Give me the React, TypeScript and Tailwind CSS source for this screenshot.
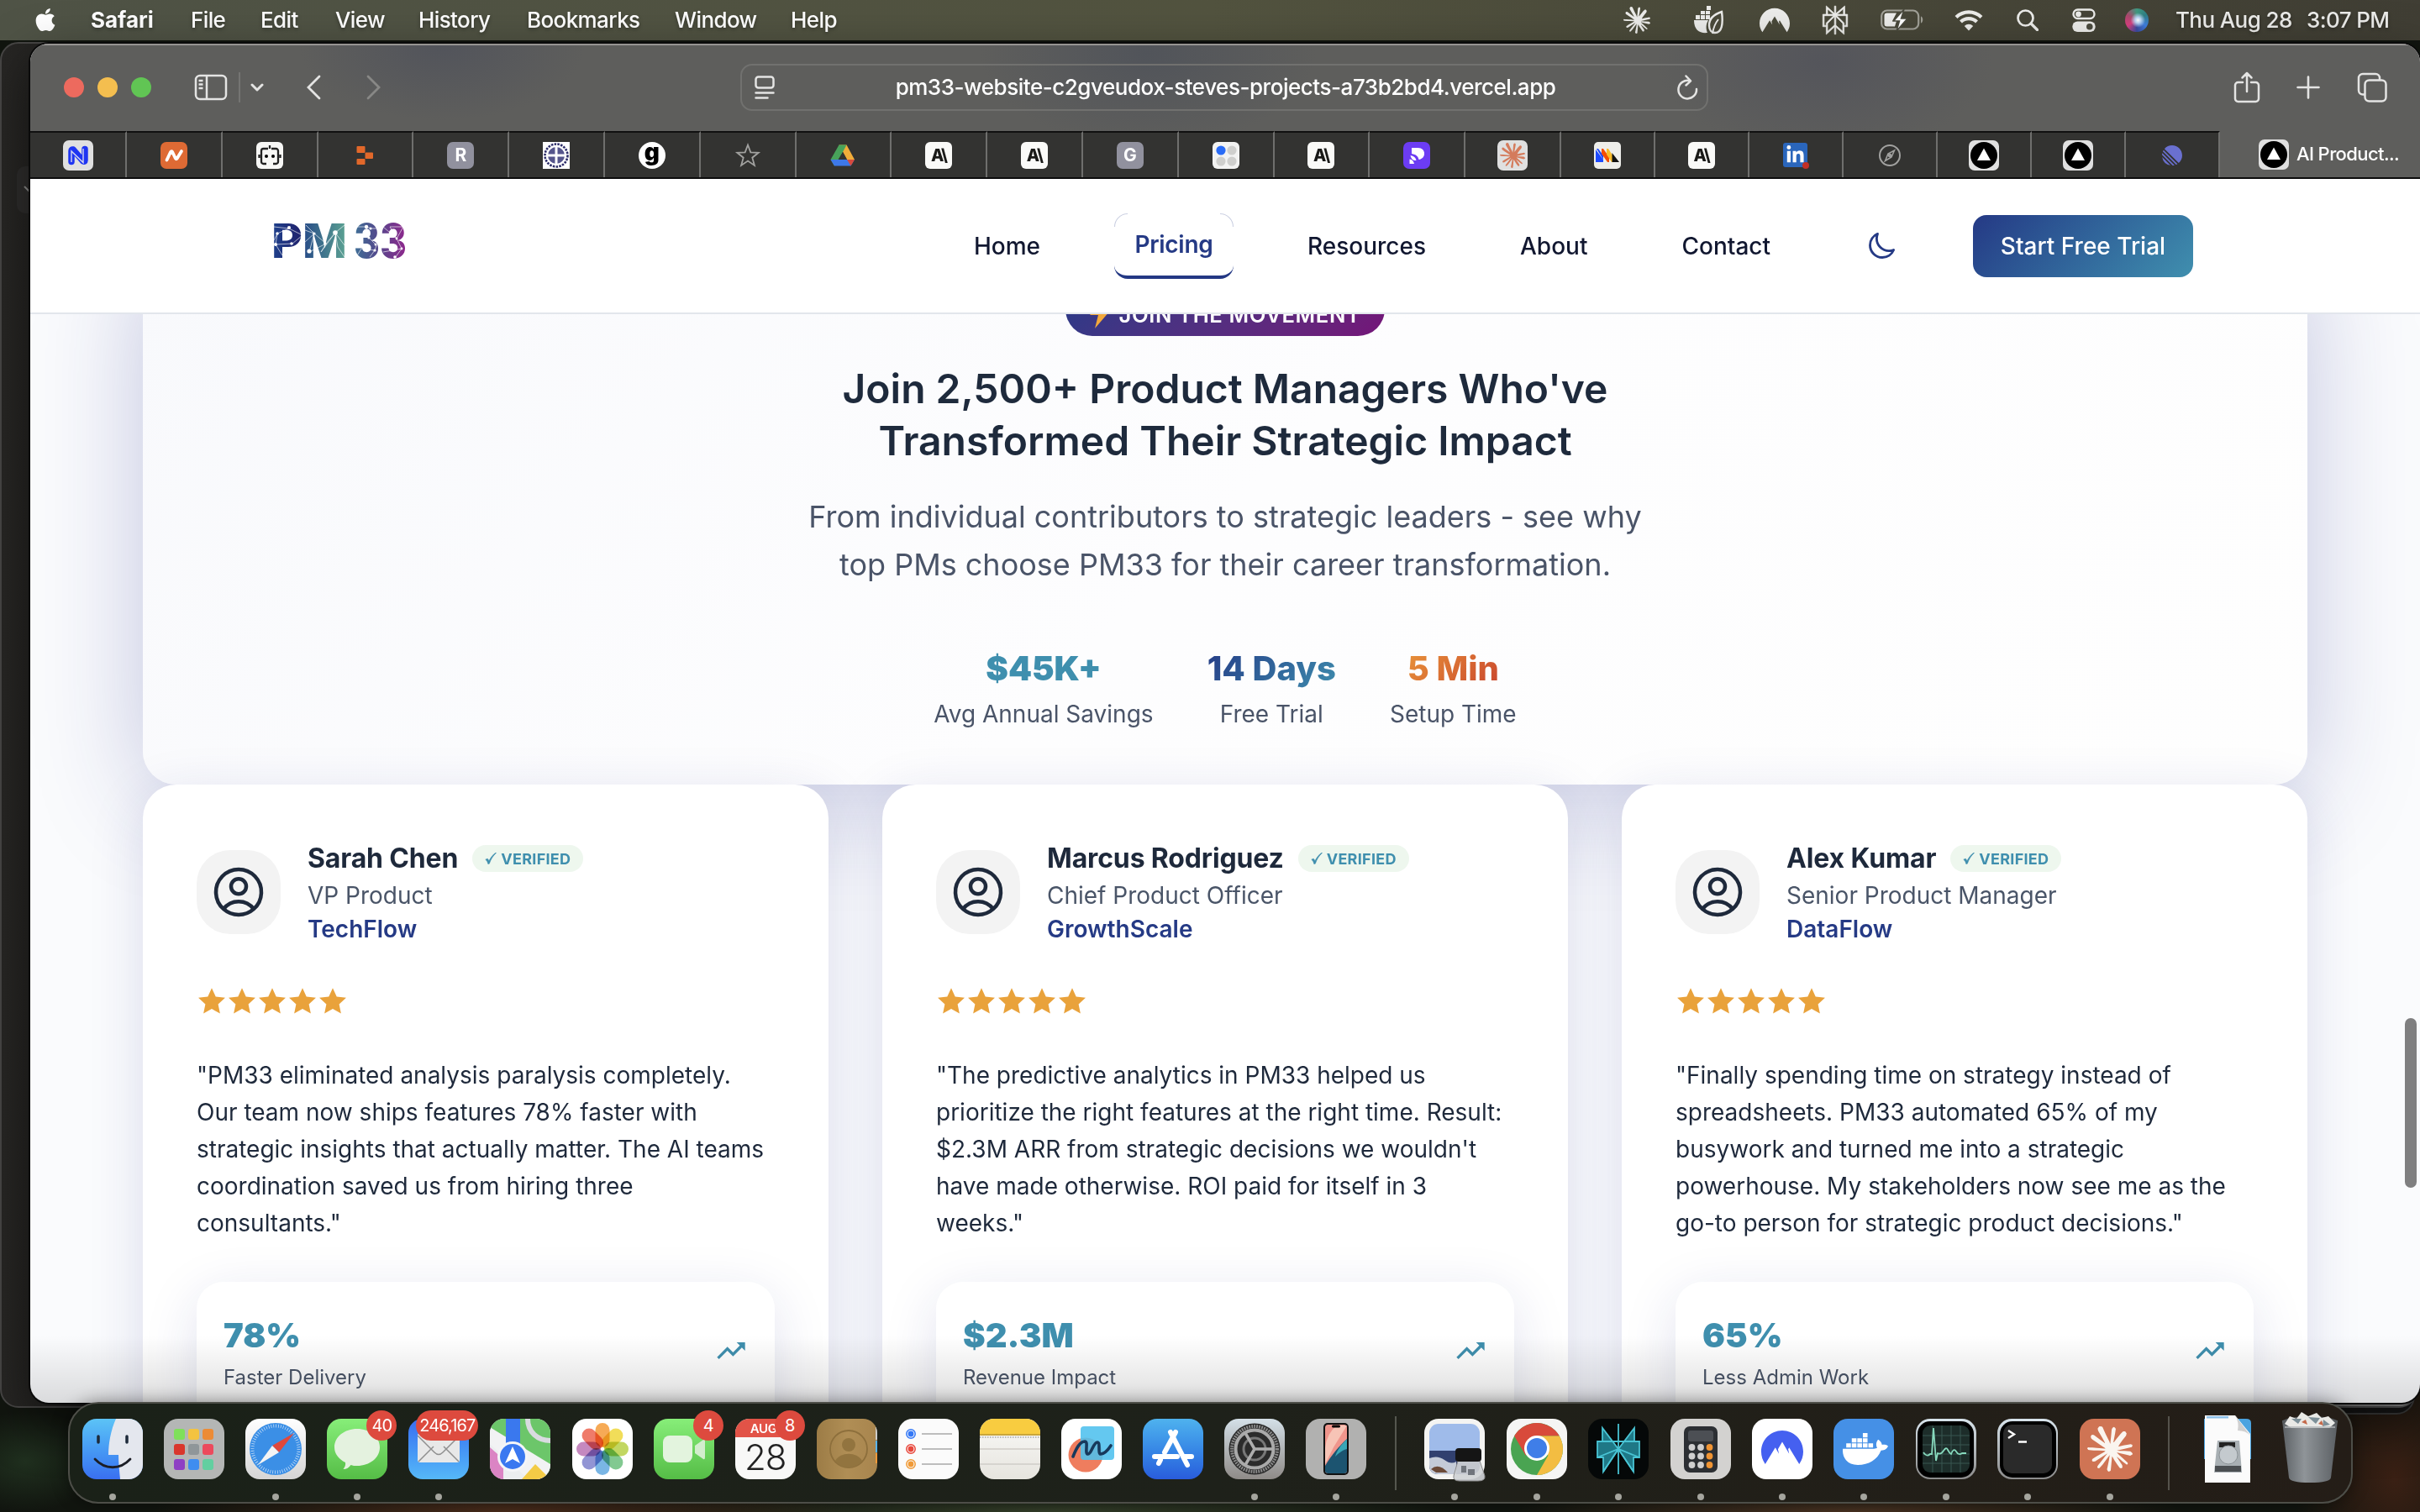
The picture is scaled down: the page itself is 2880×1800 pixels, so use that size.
import React from "react";
import { FaApple, FaDocker, FaLinkedinIn } from "react-icons/fa";
import { SiClaude, SiPerplexity, SiNordvpn, SiLinear } from "react-icons/si";

/* ---------- Menu bar ---------- */

const menuItems: [string, string][] = [
  ["File", "w-[83px]"],
  ["Edit", "w-[89px]"],
  ["View", "w-[99px]"],
  ["History", "w-[129px]"],
  ["Bookmarks", "w-[176px]"],
  ["Window", "w-[138px]"],
  ["Help", "w-[80px]"],
];

function MenuBar() {
  return (
    <div className="flex h-[48px] w-full shrink-0 items-center bg-linear-to-r from-[#4f5346] via-[#52533f] to-[#403e34] pb-[1px] text-[26px] font-medium tracking-[-0.6px] text-white [text-shadow:0_2px_4px_rgba(0,0,0,0.35)]">
      <FaApple className="ml-[38px] h-[31px] w-[32px]" />
      <div className="ml-[38px] w-[119px] font-bold tracking-normal">Safari</div>
      {menuItems.map(([label, w]) => (
        <div key={label} className={w}>
          {label}
        </div>
      ))}
      <div className="mr-[3px] ml-auto flex items-center text-[#ececea]">
        <SiClaude className="h-[32px] w-[32px]" />
        <svg viewBox="0 0 36 34" className="ml-[52px] h-[34px] w-[36px]" fill="currentColor">
          <rect x="2" y="11" width="5" height="5" />
          <rect x="8" y="11" width="5" height="5" />
          <rect x="14" y="11" width="5" height="5" />
          <rect x="8" y="6" width="5" height="4" />
          <rect x="14" y="6" width="5" height="4" />
          <rect x="15" y="0" width="5" height="5" />
          <path d="M0 17h17c-3 5-3 10-1 15-9 1-16-3-16-15Z" />
          <path d="M33 7c-9 3-15 8-15 16 0 6 3 9 7 9 8 0 10-10 8-25Z" fill="none" stroke="currentColor" strokeWidth="2.4" />
          <path d="M22 33c1-7 3-12 7-17" fill="none" stroke="currentColor" strokeWidth="2" />
        </svg>
        <SiNordvpn className="ml-[42px] h-[38px] w-[36px]" />
        <SiPerplexity className="ml-[37px] h-[34px] w-[34px] overflow-visible stroke-[#ececea] stroke-[0.5px]" />
        <svg viewBox="0 0 52 26" className="ml-[37px] h-[26px] w-[52px]">
          <rect x="1.2" y="1.5" width="44" height="22" rx="6.5" fill="none" stroke="#a1a198" strokeWidth="2.2" />
          <path d="M48 8.5c3 1 3 7 0 8z" fill="#a1a198" />
          <path d="M7.5 4.5H19L14 14h5l-2 6.500H7.500a3 3 0 0 1-3-3v-10a3 3 0 0 1 3-3Z" fill="#ececea" />
          <path d="M28 0 15.500 14h7L19 26 32 11h-7.500z" fill="#fff" stroke="#4b4b3f" strokeWidth="1.500" />
        </svg>
        <svg viewBox="0 0 34 26" className="ml-[36px] h-[26px] w-[34px]" fill="none" stroke="currentColor" strokeWidth="4.200">
          <path d="M2 9.500a21.500 21.500 0 0 1 30 0" />
          <path d="M7.500 15a13.500 13.500 0 0 1 19 0" />
          <path d="M17 25.500 11.800 20a7.400 7.400 0 0 1 10.400 0z" fill="currentColor" stroke="none" />
        </svg>
        <svg viewBox="0 0 26 26" className="ml-[40px] h-[26px] w-[26px]" fill="none" stroke="currentColor" strokeWidth="2.700">
          <circle cx="10.500" cy="10.500" r="9" />
          <path d="m17 17 7.500 7.500" strokeLinecap="round" strokeWidth="3.200" />
        </svg>
        <svg viewBox="0 0 28 28" className="ml-[40px] h-[28px] w-[28px]">
          <rect x="1.500" y="1.500" width="25" height="10.500" rx="5.200" fill="none" stroke="#ececea" strokeWidth="2.400" />
          <circle cx="7.500" cy="6.800" r="3.400" fill="#ececea" />
          <rect x="0.300" y="15.500" width="27.400" height="12.500" rx="6.200" fill="#ececea" />
          <circle cx="20.800" cy="21.700" r="3.800" fill="#4b4b3f" />
        </svg>
        <div className="ml-[35px] h-[28px] w-[28px] rounded-full bg-[radial-gradient(circle_at_55%_50%,#fff_0%,#bcd6f5_16%,transparent_42%),conic-gradient(from_0deg,#3f9a80,#2f7f86,#3f7fe0,#3a4aa0,#d8407f,#a84a6c,#3f9a80)]" />
        <div className="ml-[32px] w-[156px]">Thu Aug 28</div>
        <div className="w-[132px]">3:07 PM</div>
      </div>
    </div>
  );
}

/* ---------- Browser toolbar ---------- */

function Toolbar() {
  return (
    <div className="flex h-[104px] shrink-0 items-center border-t-2 border-[#969492] bg-[#5e5e5c] bg-[radial-gradient(ellipse_170px_90px_at_490px_0px,#52545b,transparent),radial-gradient(ellipse_200px_110px_at_1330px_10px,#51545a,transparent),radial-gradient(ellipse_200px_110px_at_2135px_20px,#54555b,transparent)] pb-[3px] text-[#e4e4e3]">
      <div className="ml-[40px] h-[24px] w-[24px] rounded-full bg-[#ed6a5e]" />
      <div className="ml-[16px] h-[24px] w-[24px] rounded-full bg-[#f4be4f]" />
      <div className="ml-[16px] h-[24px] w-[24px] rounded-full bg-[#61c554]" />
      <svg viewBox="0 0 40 32" className="ml-[51px] h-[32px] w-[40px]" fill="none" stroke="currentColor" strokeWidth="2.500">
        <rect x="2" y="2" width="36" height="28" rx="5" />
        <path d="M15 2v28M5.500 8h5M5.500 12.500h5M5.500 17h5" />
      </svg>
      <div className="ml-[13px] h-[36px] w-[2px] bg-[#747472]" />
      <svg viewBox="0 0 16 10" className="ml-[12px] h-[10px] w-[16px]" fill="none" stroke="currentColor" strokeWidth="3" strokeLinecap="round" strokeLinejoin="round">
        <path d="m2 2 6 6 6-6" />
      </svg>
      <svg viewBox="0 0 18 30" className="ml-[50px] h-[30px] w-[18px]" fill="none" stroke="currentColor" strokeWidth="2.800" strokeLinecap="round">
        <path d="M16 2 3 15l13 13" />
      </svg>
      <svg viewBox="0 0 18 30" className="ml-[54px] h-[30px] w-[18px]" fill="none" stroke="#888886" strokeWidth="2.800" strokeLinecap="round">
        <path d="m2 2 13 13L2 28" />
      </svg>
      <div className="ml-[427px] flex h-[56px] w-[1152px] items-center rounded-[14px] border-2 border-[#71716f]">
        <svg viewBox="0 0 24 28" className="ml-[15px] h-[28px] w-[24px]" fill="none" stroke="currentColor" strokeWidth="2.500" strokeLinecap="round">
          <rect x="1.500" y="1.500" width="21" height="13" rx="3" />
          <path d="M1.500 20.500h21M1.500 26.500h14" />
        </svg>
        <div className="flex-1 text-center text-[26px] font-medium tracking-[-0.47px] text-white">
          pm33-website-c2gveudox-steves-projects-a73b2bd4.vercel.app
        </div>
        <svg viewBox="0 0 26 30" className="mr-[10px] h-[30px] w-[26px]" fill="none" stroke="currentColor" strokeWidth="2.500" strokeLinecap="round" strokeLinejoin="round">
          <path d="M16 7.200A10.800 10.800 0 1 0 24 17" />
          <path d="m11.500 1.500 5.500 5.800-5.500 5.200" />
        </svg>
      </div>
      <svg viewBox="0 0 32 38" className="ml-[625px] h-[38px] w-[32px]" fill="none" stroke="currentColor" strokeWidth="2.500" strokeLinecap="round" strokeLinejoin="round">
        <path d="M11 13H5.500A3.500 3.500 0 0 0 2 16.500v16A3.500 3.500 0 0 0 5.500 36h21a3.500 3.500 0 0 0 3.500-3.500v-16a3.500 3.500 0 0 0-3.500-3.500H21M16 24V2M10.500 7.500 16 2l5.500 5.500" />
      </svg>
      <svg viewBox="0 0 28 28" className="ml-[43px] h-[28px] w-[28px]" fill="none" stroke="currentColor" strokeWidth="2.600" strokeLinecap="round">
        <path d="M14 1.500v25M1.500 14h25" />
      </svg>
      <svg viewBox="0 0 36 36" className="ml-[44px] h-[36px] w-[36px]" fill="none" stroke="currentColor" strokeWidth="2.500">
        <path d="M9.500 26.500H7A5 5 0 0 1 2 21.500V7a5 5 0 0 1 5-5h15a5 5 0 0 1 5 5v2.500" />
        <rect x="9.500" y="9.500" width="25" height="25" rx="5" />
      </svg>
    </div>
  );
}

/* ---------- Tab strip ---------- */

const AiTab = () => (
  <div className="flex h-[32px] w-[32px] items-center justify-center rounded-[6px] bg-[#fafaf8] text-[20px] font-extrabold tracking-[-1.5px] text-[#1a1a18]">A\</div>
);
const VercelTab = () => (
  <svg viewBox="0 0 36 36" className="h-[36px] w-[36px] shrink-0">
    <rect width="36" height="36" rx="7" fill="#e0e0e0" />
    <circle cx="18" cy="18" r="16" fill="#000" />
    <path d="M18 9.500 26 24H10z" fill="#fff" />
  </svg>
);
const LetterTab = ({ letter }: { letter: string }) => (
  <div className="flex h-[32px] w-[32px] items-center justify-center rounded-[7px] bg-[#91919e] text-[21px] font-bold text-white">{letter}</div>
);

const tabIcons: React.ReactNode[] = [
  <svg viewBox="0 0 36 36" className="h-[36px] w-[36px]">
    <rect width="36" height="36" rx="7" fill="#e0e0e0" />
    <path d="M10 25.500V12.500q0-2 2-1.500l12 14q2 1 2-1V10.500" fill="none" stroke="#1f35f2" strokeWidth="7.500" strokeLinejoin="round" strokeLinecap="round" />
    <path d="M10 26V13l14 13.500V10" fill="none" stroke="#d6d8f0" strokeWidth="1.400" />
  </svg>,
  <svg viewBox="0 0 32 32" className="h-[32px] w-[32px]">
    <rect width="32" height="32" rx="7" fill="#de6a34" />
    <path d="M7.500 21.500 12 12q1-1.500 2.200 0l3.600 7.500q1 1.500 2 0L25 11" fill="none" stroke="#fff" strokeWidth="3.800" strokeLinecap="round" strokeLinejoin="round" />
  </svg>,
  <svg viewBox="0 0 32 32" className="h-[32px] w-[32px]">
    <rect width="32" height="32" rx="6" fill="#f7f7f5" />
    <path d="M14 8H8.500A2.500 2.500 0 0 0 6 10.500v13A2.500 2.500 0 0 0 8.500 26H12M18 8h5.500a2.500 2.500 0 0 1 2.500 2.500v13a2.500 2.500 0 0 1-2.500 2.500H20M16 4v4M3.500 15v4M28.500 15v4" fill="none" stroke="#222" strokeWidth="2.300" />
    <circle cx="12" cy="17" r="2" />
    <circle cx="20" cy="17" r="2" />
  </svg>,
  <svg viewBox="0 0 32 32" className="h-[32px] w-[32px]" fill="#e2682a">
    <rect x="6.500" y="5" width="10" height="8" rx="1" />
    <rect x="16.500" y="12.500" width="9.500" height="7.500" rx="1" />
    <rect x="6.500" y="20" width="10" height="7" rx="1" />
  </svg>,
  <LetterTab letter="R" />,
  <svg viewBox="0 0 32 32" className="h-[32px] w-[32px]">
    <rect width="32" height="32" fill="#fff" />
    <circle cx="16" cy="16" r="13.500" fill="none" stroke="#2b2b68" strokeWidth="2.600" strokeDasharray="2.500 1.300" />
    <circle cx="16" cy="16" r="10" fill="#55558c" />
    <path d="M16 6v20M6 16h20" stroke="#fff" strokeWidth="3" />
  </svg>,
  <div className="flex h-[32px] w-[32px] items-center justify-center rounded-full bg-white text-[28px] leading-none font-black text-black">
    <span className="-mt-[7px]">g</span>
  </div>,
  <svg viewBox="0 0 32 32" className="h-[32px] w-[32px]" fill="none" stroke="#a2a2a0" strokeWidth="1.800">
    <path d="m16 3.500 3.300 8.900 9.400.4-7.400 5.900 2.600 9.200-7.900-5.300-7.900 5.300 2.600-9.200-7.400-5.900 9.400-.4z" />
  </svg>,
  <svg viewBox="0 0 32 32" className="h-[32px] w-[32px]">
    <path d="M11.500 3.500h9L30 21h-9z" fill="#f1ad3a" />
    <path d="M11.500 3.500h9L16 12 6 28.500 1.500 21z" fill="#48a25a" />
    <path d="M6 28.500 1.500 21H30l-4.500 7.500z" fill="#3d78e8" />
    <path d="M21 21h9l-4.500 7.500z" fill="#d84a3c" />
    <path d="m16 12 5 9H11z" fill="#333331" />
  </svg>,
  <AiTab />,
  <AiTab />,
  <LetterTab letter="G" />,
  <svg viewBox="0 0 32 32" className="h-[32px] w-[32px]">
    <rect width="32" height="32" rx="6" fill="#f3f3f2" />
    <circle cx="10" cy="10" r="5.600" fill="#2a6cf6" />
    <circle cx="23" cy="10" r="5.600" fill="#cfcfcd" />
    <circle cx="10" cy="23" r="5.600" fill="#cfcfcd" />
    <circle cx="23" cy="23" r="5.600" fill="#cfcfcd" />
  </svg>,
  <AiTab />,
  <svg viewBox="0 0 32 32" className="h-[32px] w-[32px]">
    <rect width="32" height="32" rx="7" fill="#6c3cf3" />
    <path d="M10 7h7.500c10 0 10 13 1 14-1-4-3-6-8.500-7zM8.500 16c4 .5 6.500 2.500 7 6-3 .5-6-1-7-6ZM7.500 20.500c3 .3 5 2.500 5.500 5.500H7.500z" fill="#fff" />
  </svg>,
  <div className="flex h-[36px] w-[36px] items-center justify-center rounded-[7px] bg-[#e0e0e0]">
    <SiClaude className="h-[30px] w-[30px] text-[#d47b5c]" />
  </div>,
  <svg viewBox="0 0 32 32" className="h-[32px] w-[32px]">
    <rect width="32" height="32" rx="5" fill="#eeeeea" />
    <path d="M2 9v15h9v-3z" fill="#1d4aff" />
    <path d="M3 8h2l6 8v5z" fill="#1d4aff" />
    <path d="M9 8h2l7 10v6h-2l-7-10z" fill="#f54e00" />
    <path d="M15 8h2l5 8v8h-1l-6-9z" fill="#f9bd2b" />
    <path d="M21.500 13 30 24h-8.500z" fill="#111" />
  </svg>,
  <AiTab />,
  <div className="relative flex h-[29px] w-[29px] items-center justify-center rounded-[3px] bg-[#2a66bc]">
    <FaLinkedinIn className="h-[23px] w-[23px] text-white" />
    <div className="absolute -right-[2px] -bottom-[2px] h-[8px] w-[8px] rounded-full bg-[#c22f25]" />
  </div>,
  <svg viewBox="0 0 32 32" className="h-[32px] w-[32px]" fill="none" stroke="#a2a2a0" strokeWidth="2">
    <circle cx="16" cy="16" r="12" />
    <path d="m21.500 10-3.500 8-7.500 4.500 3.500-8.500z" strokeWidth="1.600" />
    <circle cx="16" cy="16" r="1.300" />
  </svg>,
  <VercelTab />,
  <VercelTab />,
  <SiLinear className="h-[24px] w-[24px] text-[#6a70d0]" />,
];

function TabStrip() {
  return (
    <div className="flex h-[57px] shrink-0 border-b-2 border-[#0c0c0c] bg-[#333331]">
      {tabIcons.map((icon, i) => (
        <div
          key={i}
          className={`${i === 0 ? "w-[115px]" : i < 16 ? "w-[113.800px]" : "w-[112px]"} flex shrink-0 items-center justify-center border-t-2 border-r-2 border-t-[#101010] border-r-[#6f6f6d]`}
        >
          {icon}
        </div>
      ))}
      <div className="flex flex-1 items-center gap-[9px] bg-[#5e5e5c] pl-[46px] text-[22px] font-medium tracking-[-0.600px] whitespace-nowrap text-white">
        <VercelTab />
        AI Product...
      </div>
    </div>
  );
}

/* ---------- Site header ---------- */

function Logo() {
  return (
    <svg viewBox="0 0 158 42" className="mt-[-12px] h-[42px] w-[158px] overflow-visible">
      <defs>
        <linearGradient id="pm" x1="0" y1="0" x2="84" y2="0" gradientUnits="userSpaceOnUse">
          <stop offset="0" stopColor="#1f3f8a" />
          <stop offset="0.350" stopColor="#20246f" />
          <stop offset="0.450" stopColor="#2a5088" />
          <stop offset="1" stopColor="#5a9f92" />
        </linearGradient>
        <linearGradient id="n33" x1="96" y1="0" x2="158" y2="0" gradientUnits="userSpaceOnUse">
          <stop offset="0" stopColor="#3f6f96" />
          <stop offset="0.450" stopColor="#54488c" />
          <stop offset="1" stopColor="#90278c" />
        </linearGradient>
      </defs>
      <g fontFamily="Inter" fontSize="56" fontWeight="800">
        <text x="-3" y="41" textLength="37" lengthAdjust="spacingAndGlyphs" fill="url(#pm)">P</text>
        <text x="34" y="41" textLength="53" lengthAdjust="spacingAndGlyphs" fill="url(#pm)">M</text>
        <text x="95" y="41" textLength="31" lengthAdjust="spacingAndGlyphs" fill="url(#n33)">3</text>
        <text x="126" y="41" textLength="32" lengthAdjust="spacingAndGlyphs" fill="url(#n33)">3</text>
      </g>
      <path
        d="M0 4 18 6 34 14 22 24 2 25 4 12 18 6M2 25 10 38M4 12 0 20M37 8 48 12 42 34 62 24 73 11 84 2M48 12 62 24 56 34 73 11 84 26M73 11 76 28 84 40M37 22 48 12 38 2M98 4 110 4 116 6 128 6M110 4 113 17 122 26 120 32 104 30 98 40M120 32 114 40M130 4 146 18 138 4 154 4 146 18 152 30 144 41M152 30 130 34"
        fill="none"
        stroke="#fff"
        strokeOpacity="0.700"
        strokeWidth="0.900"
      />
      <g fill="#fff">
        <circle cx="18" cy="5" r="2" />
        <circle cx="4" cy="12" r="1.800" />
        <circle cx="21" cy="24" r="1.800" />
        <circle cx="2" cy="25" r="2" />
        <circle cx="73" cy="11" r="2.800" />
        <circle cx="48" cy="12" r="1.600" />
        <circle cx="42" cy="33" r="2.600" />
        <circle cx="61" cy="24" r="1.600" />
        <circle cx="110" cy="4" r="2.200" />
        <circle cx="115" cy="6" r="1.500" />
        <circle cx="113" cy="17" r="1.600" />
        <circle cx="121" cy="25" r="1.500" />
        <circle cx="120" cy="32" r="1.600" />
        <circle cx="146" cy="18" r="1.400" />
        <circle cx="152" cy="30" r="1.400" />
        <circle cx="144" cy="40" r="1.800" />
      </g>
    </svg>
  );
}

function SiteHeader() {
  return (
    <div className="flex h-[161px] shrink-0 items-center border-b-2 border-[#e2e6ec] bg-white pr-[270px] pl-[290px] text-[28px] font-medium text-[#111730]">
      <Logo />
      <div className="ml-auto flex items-center gap-[64px]">
        {["Home", "Pricing", "Resources", "About", "Contact"].map((l) =>
          l === "Pricing" ? (
            <div key={l} className="relative flex h-[78px] w-[142px] items-center justify-center rounded-[16px] border-b-4 border-[#233884] font-semibold tracking-[-0.300px] text-[#253a85]">
              <div className="absolute top-0 left-0 h-[16px] w-[16px] rounded-tl-[16px] border-t border-l border-[#253a85]/25" />
              <div className="absolute top-0 right-0 h-[16px] w-[16px] rounded-tr-[16px] border-t border-r border-[#253a85]/25" />
              {l}
            </div>
          ) : (
            <div key={l} className="px-[24px]">
              {l}
            </div>
          ),
        )}
      </div>
      <svg viewBox="0 0 24 24" className="mr-[91px] ml-[90px] h-[36px] w-[36px]" fill="none" stroke="#253a85" strokeWidth="1.900" strokeLinejoin="round">
        <path d="M21.752 15.002A9.720 9.720 0 0 1 18 15.750c-5.385 0-9.750-4.365-9.750-9.750 0-1.330.266-2.597.748-3.752A9.753 9.753 0 0 0 3 11.250C3 16.635 7.365 21 12.750 21a9.753 9.753 0 0 0 9.002-5.998Z" />
      </svg>
      <div className="flex h-[74px] w-[262px] items-center justify-center rounded-[16px] bg-linear-135 from-[#253985] to-[#408fae] text-white">
        Start Free Trial
      </div>
    </div>
  );
}

/* ---------- Page content ---------- */

function Hero() {
  return (
    <div className="-mt-[80px] flex h-[640px] shrink-0 flex-col items-center rounded-[40px] bg-linear-135 from-[#f8f9fc] via-[#fdfdfe] to-[#fefefe] pt-[42px] shadow-[0_16px_128px_rgba(31,38,135,0.25)]">
      <div className="flex h-[64px] w-[380px] items-center justify-center gap-[9px] rounded-[32px] bg-linear-135 from-[#253a88] to-[#741478] pt-[14px] text-[25.600px] font-semibold tracking-[0.640px] text-white">
        <svg viewBox="0 0 26 34" className="h-[34px] w-[26px]">
          <path d="M17 0 1 17h10L7 33l18-21H14z" fill="#f3a93c" />
        </svg>
        JOIN THE MOVEMENT
      </div>
      <h2 className="mt-[32px] text-center text-[48px] leading-[62.400px] font-semibold text-[#1e2a3c]">
        Join 2,500+ Product Managers Who've
        <br />
        Transformed Their Strategic Impact
      </h2>
      <p className="mt-[30px] text-center text-[36px] leading-[57.600px] text-[#4a5468]">
        From individual contributors to strategic leaders - see why
        <br />
        top PMs choose PM33 for their career transformation.
      </p>
      <div className="mt-[62px] flex gap-[64px] text-center text-[28px] leading-[45px] text-[#4a5468]">
        <div>
          <div className="text-[40px] leading-[64px] font-black text-[#3f8fae]">$45K+</div>
          Avg Annual Savings
        </div>
        <div>
          <div className="bg-linear-135 from-[#253985] to-[#408fae] bg-clip-text text-[40px] leading-[64px] font-extrabold text-transparent">14 Days</div>
          Free Trial
        </div>
        <div>
          <div className="mx-auto w-fit bg-linear-135 from-[#e9973a] to-[#c73e2c] bg-clip-text text-[40px] leading-[64px] font-extrabold text-transparent">5 Min</div>
          Setup Time
        </div>
      </div>
    </div>
  );
}

const testimonials = [
  {
    name: "Sarah Chen", role: "VP Product", company: "TechFlow", metric: "78%", label: "Faster Delivery",
    quote: ['"PM33 eliminated analysis paralysis completely.', "Our team now ships features 78% faster with", "strategic insights that actually matter. The AI teams", "coordination saved us from hiring three", 'consultants."'],
  },
  {
    name: "Marcus Rodriguez", role: "Chief Product Officer", company: "GrowthScale", metric: "$2.3M", label: "Revenue Impact",
    quote: ['"The predictive analytics in PM33 helped us', "prioritize the right features at the right time. Result:", "$2.3M ARR from strategic decisions we wouldn't", "have made otherwise. ROI paid for itself in 3", 'weeks."'],
  },
  {
    name: "Alex Kumar", role: "Senior Product Manager", company: "DataFlow", metric: "65%", label: "Less Admin Work",
    quote: ['"Finally spending time on strategy instead of', "spreadsheets. PM33 automated 65% of my", "busywork and turned me into a strategic", "powerhouse. My stakeholders now see me as the", 'go-to person for strategic product decisions."'],
  },
];

function Card({ t }: { t: (typeof testimonials)[number] }) {
  return (
    <div className="flex h-[900px] w-[816px] flex-col rounded-[40px] bg-white p-[64px] shadow-[0_16px_64px_rgba(31,38,135,0.15)]">
      <div className="flex items-center gap-[32px]">
        <div className="flex h-[100px] w-[100px] items-center justify-center rounded-[40px] bg-[#f3f3f3]">
          <svg viewBox="0 0 24 24" className="h-[72px] w-[72px]" fill="none" stroke="#1e293b" strokeWidth="1.500" strokeLinecap="round" strokeLinejoin="round">
            <path d="M17.982 18.725A7.488 7.488 0 0 0 12 15.750a7.488 7.488 0 0 0-5.982 2.975m11.963 0a9 9 0 1 0-11.963 0m11.963 0A8.966 8.966 0 0 1 12 21a8.966 8.966 0 0 1-5.982-2.275M15 9.750a3 3 0 1 1-6 0 3 3 0 0 1 6 0Z" />
          </svg>
        </div>
        <div>
          <div className="flex h-[48px] items-center gap-[17px] text-[32px] font-bold tracking-[-0.150px] text-[#1e293b]">
            {t.name}
            <div className="flex h-[32px] w-[132px] items-center justify-center gap-[4px] rounded-full bg-[#eef7ee] text-[18px] font-bold tracking-[0.300px] text-[#3f8fae]">
              <svg viewBox="0 0 15 14" className="h-[14px] w-[15px]" fill="#3f8fae">
                <path d="M13.500.5C10 3.500 7.200 7.500 5.300 13.200L3.800 13.500C3.200 11 2.300 9.300.8 8.200l2.400-1c.8.800 1.300 1.700 1.700 2.900C7 5.800 9.500 2.500 12.800.3z" stroke="#3f8fae" strokeWidth="0.600" />
              </svg>
              VERIFIED
            </div>
          </div>
          <div className="flex h-[40px] items-center text-[28px] text-[#4a5568]">{t.role}</div>
          <div className="flex h-[40px] items-center text-[28px] font-semibold text-[#253a85]">{t.company}</div>
        </div>
      </div>
      <div className="mt-[49px] flex">
        {[0, 1, 2, 3, 4].map((i) => (
          <svg key={i} viewBox="0 0 36 36" className="h-[36px] w-[36px]" fill="#e9a23b">
            <polygon points="18,1.200 22.700,11.500 33.980,12.810 25.600,20.500 27.870,31.590 18,26 8.130,31.590 10.400,20.500 2.020,12.810 13.300,11.500" />
          </svg>
        ))}
      </div>
      <div className="mt-[47px] text-[28px] leading-[44px] whitespace-nowrap text-[#1e293b]">
        {t.quote.map((line) => (
          <div key={line}>{line}</div>
        ))}
      </div>
      <div className="mt-[48px] flex items-center justify-between rounded-[32px] bg-white p-[32px] pb-[40px] shadow-[0_16px_64px_rgba(31,38,135,0.13)]">
        <div>
          <div className="text-[40px] leading-[64px] font-black text-[#3f8fae]">{t.metric}</div>
          <div className="text-[24px] leading-[36px] text-[#4a5568]">{t.label}</div>
        </div>
        <svg viewBox="0 0 24 24" className="h-[40px] w-[40px]" fill="#3f8fae">
          <path d="m16 6 2.290 2.290-4.880 4.880-4-4L2 16.590 3.410 18l6-6 4 4 6.300-6.290L22 12V6z" />
        </svg>
      </div>
    </div>
  );
}

function BrowserWindow() {
  return (
    <div className="absolute top-[52px] left-[36px] flex h-[1618px] w-[2844px] flex-col overflow-hidden rounded-[22px] bg-[#fafbfd] shadow-[0_0_0_2px_#0a0a0a,0_20px_60px_rgba(0,0,0,0.5)]">
      <Toolbar />
      <TabStrip />
      <SiteHeader />
      <div className="flex flex-1 flex-col overflow-hidden px-[134px]">
        <Hero />
        <div className="flex gap-[64px]">
          {testimonials.map((t) => (
            <Card key={t.name} t={t} />
          ))}
        </div>
      </div>
      <div className="absolute right-[4px] top-[1160px] h-[202px] w-[14px] rounded-full bg-[#7f7f80]" />
      <div className="absolute bottom-0 left-0 h-[80px] w-full bg-linear-to-b from-transparent to-black/13" />
    </div>
  );
}

/* ---------- Dock ---------- */

type DockItem = { icon: React.ReactNode; dot?: boolean; badge?: string };

const Tile = ({ className, children }: { className: string; children?: React.ReactNode }) => (
  <div className={`relative h-[72px] w-[72px] overflow-hidden rounded-[17px] ${className}`}>{children}</div>
);
const Art = ({ children }: { children: React.ReactNode }) => (
  <svg viewBox="0 0 72 72" className="absolute inset-0 h-[72px] w-[72px]">
    {children}
  </svg>
);

const padColors = ["#7fe05a", "#f3c340", "#ec8b35", "#d9362c", "#8f9699", "#ec4a5c", "#8e3fc4", "#3f8df0", "#62cfa0"];
const petals: [number, string][] = [
  [0, "#f49b38"], [45, "#efd73c"], [90, "#b7d046"], [135, "#6cc07e"],
  [180, "#63a9e0"], [225, "#7f82cc"], [270, "#bb74b4"], [315, "#ec6450"],
];
const range = (n: number) => Array.from({ length: n }, (_, i) => i);

const leftApps: DockItem[] = [
  {
    dot: true,
    icon: (
      <Tile className="bg-linear-to-b from-[#5cc3f6] to-[#3a6ff0]">
        <Art>
          <path d="M40 0h32v72H45c-1-10-2-20-2-29H31c0-14 3-30 9-43Z" fill="#e4e7ee" />
          <path d="M19 21v7M53 21v7" stroke="#1d2a3a" strokeWidth="3.500" strokeLinecap="round" />
          <path d="M15 48c12 13 30 13 42 0" fill="none" stroke="#1c1e26" strokeWidth="2.800" strokeLinecap="round" />
        </Art>
      </Tile>
    ),
  },
  {
    icon: (
      <Tile className="bg-[#b4b6b5]">
        <div className="grid w-[59px] grid-cols-[13px_13px_13px] gap-x-[4px] gap-y-[5px] pt-[12px] pl-[12px]">
          {padColors.map((c) => (
            <div key={c} className="h-[13px] w-[13px] rounded-[3px]" style={{ background: c }} />
          ))}
        </div>
      </Tile>
    ),
  },
  {
    dot: true,
    icon: (
      <Tile className="bg-linear-to-b from-white to-[#d5d5d5]">
        <Art>
          <circle cx="36" cy="36" r="31" fill="#3b8fe6" />
          <circle cx="36" cy="36" r="27.500" fill="none" stroke="#fff" strokeOpacity="0.700" strokeWidth="4" strokeDasharray="0.800 2.080" />
          <path d="M58 17 40 40l-8-8z" fill="#e0483c" />
          <path d="M15 55 32 32l8 8z" fill="#f4f4f4" />
        </Art>
      </Tile>
    ),
  },
  {
    dot: true,
    badge: "40",
    icon: (
      <Tile className="bg-linear-to-b from-[#87ee79] to-[#55bd46]">
        <Art>
          <path d="M36 12c15 0 27 9.500 27 22S51 56 36 56c-3 0-5 0-7.500-1-2 3-5 5-9 5 2-2.500 3-5 2.500-8C14 48 9 41.500 9 34c0-12.500 12-22 27-22Z" fill="#e4f2df" />
        </Art>
      </Tile>
    ),
  },
  {
    dot: true,
    badge: "246,167",
    icon: (
      <Tile className="bg-linear-to-b from-[#3a6cf0] to-[#56b8f8]">
        <Art>
          <rect x="11" y="17" width="50" height="35" rx="3" fill="#e8e8e8" />
          <path d="m12 51 18-18M60 51 42 33M11 20l20 20q5 5 10 0l20-20" fill="none" stroke="#8f8f8f" strokeWidth="1.500" />
        </Art>
      </Tile>
    ),
  },
  {
    icon: (
      <Tile className="bg-[#eceef0]">
        <Art>
          <path d="M0 10 72 72V0H0z" fill="#6cc66a" />
          <path d="M0 10v20l46 42h26V54z" fill="#f2f2f4" />
          <path d="M0 34v38h16V48z" fill="#db84c4" />
          <path d="M38 72 54 54l18 18z" fill="#f3cb46" />
          <path d="M45 0c0 16 12 26 27 26" fill="none" stroke="#d9dbe0" strokeWidth="6" />
          <rect x="19" y="0" width="17" height="40" fill="#3a78ee" />
          <circle cx="27" cy="45" r="18" fill="#f4f5f8" />
          <circle cx="27" cy="45" r="15" fill="#3a78f0" />
          <path d="m27 33 9 20-9-5-9 5z" fill="#fff" />
        </Art>
      </Tile>
    ),
  },
  {
    icon: (
      <Tile className="bg-white">
        <Art>
          {petals.map(([a, c]) => (
            <rect key={a} x="27.500" y="5" width="17" height="29" rx="8.500" fill={c} fillOpacity="0.850" transform={`rotate(${a} 36 36)`} style={{ mixBlendMode: "multiply" }} />
          ))}
        </Art>
      </Tile>
    ),
  },
  {
    badge: "4",
    icon: (
      <Tile className="bg-linear-to-b from-[#87ee79] to-[#55bd46]">
        <Art>
          <rect x="11" y="20" width="35" height="32" rx="8" fill="#e3f4de" />
          <path d="M49 32 59 25q2-1 2 1v20q0 3-2 2l-10-7z" fill="#d3edcd" />
        </Art>
      </Tile>
    ),
  },
  {
    badge: "8",
    icon: (
      <Tile className="bg-[#f8f8f7]">
        <div className="h-[22px] bg-[#e25347] pl-[18px] text-[15px] leading-[24px] font-semibold tracking-[-0.300px] text-white">AUG</div>
        <div className="text-center text-[42px] leading-[47px] font-light tracking-[-1px] text-[#222]">28</div>
      </Tile>
    ),
  },
  {
    icon: (
      <Tile className="bg-linear-to-r from-[#9c7c46] via-[#b08e55] to-[#a8854e]">
        <Art>
          <path d="M70 10h2v15h-2z" fill="#ccc" />
          <path d="M70 26h2v14h-2z" fill="#5ab4f0" />
          <path d="M70 41h2v12h-2z" fill="#f09a3a" />
          <circle cx="38" cy="36" r="22" fill="none" stroke="#8d6f3c" strokeWidth="1.800" />
          <circle cx="38" cy="31" r="8" fill="#92743f" />
          <path d="M22 50c6-11 26-11 32 0-8 11-24 11-32 0Z" fill="#92743f" />
        </Art>
      </Tile>
    ),
  },
  {
    icon: (
      <Tile className="bg-[#fbfbfb]">
        <Art>
          {[["#3478f6", 18], ["#e8473c", 36], ["#f09a37", 54]].map(([c, y]) => (
            <g key={c}>
              <circle cx="15" cy={y} r="5.200" fill="none" stroke={c as string} strokeWidth="1.500" />
              <circle cx="15" cy={y} r="3.400" fill={c as string} />
              <path d={`M28 ${y}h36`} stroke="#bdbdbd" strokeWidth="1.800" />
            </g>
          ))}
        </Art>
      </Tile>
    ),
  },
  {
    icon: (
      <Tile className="bg-linear-to-b from-[#fafaf8] to-[#e6e4de]">
        <Art>
          <rect width="72" height="18" fill="#f8cc40" />
          <rect y="18" width="72" height="2" fill="#c9a63a" />
          <path d="M0 22h72" stroke="#bbb" strokeWidth="2" strokeDasharray="1.500 1.500" />
          <path d="M0 36h72M0 54h72" stroke="#cfcdc8" strokeWidth="1.500" />
        </Art>
      </Tile>
    ),
  },
  {
    icon: (
      <Tile className="bg-white">
        <Art>
          <circle cx="29" cy="43" r="20.500" fill="#ef7d5e" />
          <rect x="23" y="9" width="40" height="40" rx="4" fill="#4fc0ee" fillOpacity="0.880" />
          <path d="M14 45c4-10 8-18 14-18 5 0-1 15 4 15 4 0 6-14 11-14 4 0 0 14 4 14s8-4 12-10" fill="none" stroke="#17395c" strokeWidth="3.600" strokeLinecap="round" />
        </Art>
      </Tile>
    ),
  },
  {
    icon: (
      <Tile className="bg-linear-to-b from-[#4fb2ee] to-[#2a5cdc]">
        <Art>
          <g stroke="#fff" strokeWidth="6" strokeLinecap="round">
            <path d="M39 16 26 40M33 16l20 39M19 53l2-4" />
            <path d="M14 45h27M49 45h9" />
          </g>
        </Art>
      </Tile>
    ),
  },
  {
    dot: true,
    icon: (
      <Tile className="bg-linear-to-b from-[#d4e0e8] to-[#8f8b88]">
        <Art>
          <circle cx="36" cy="36" r="30.500" fill="#2b2b2b" />
          <circle cx="36" cy="36" r="27" fill="none" stroke="#8b8b8b" strokeWidth="4" strokeDasharray="1.800 1.200" />
          <circle cx="36" cy="36" r="22.500" fill="none" stroke="#a9a9a9" strokeWidth="4" />
          <circle cx="36" cy="36" r="13" fill="none" stroke="#777" strokeWidth="3" />
          <path d="M36 36h22M36 36 25 17M36 36 25 55" stroke="#adadad" strokeWidth="3.500" />
        </Art>
      </Tile>
    ),
  },
  {
    dot: true,
    icon: (
      <Tile className="bg-[#b1b1b0]">
        <Art>
          <rect x="21" y="5" width="30" height="62" rx="5" fill="#111" />
          <rect x="23" y="7" width="26" height="58" rx="3.500" fill="#f0958c" />
          <path d="M49 8 33 34 23 54V35q2-18 14-27z" fill="#f7c4b6" />
          <path d="M49 24C40 32 30 44 23 56v6q0 3 3.500 3h19q3.500 0 3.500-3z" fill="#1c5470" />
          <path d="M49 24c-8 8-12 14-14 21 4-4 9-8 14-9z" fill="#3aa6b6" />
          <rect x="31" y="7.500" width="10" height="3" rx="1.500" fill="#000" />
        </Art>
      </Tile>
    ),
  },
];

const rightApps: DockItem[] = [
  {
    dot: true,
    icon: (
      <div className="relative h-[72px] w-[72px]">
        <Tile className="bg-[#f4f4f2]">
          <Art>
            <rect x="6" y="6" width="60" height="60" rx="11" fill="#9fbbea" />
            <path d="M6 38h60v18q0 10-11 10H17Q6 66 6 55z" fill="#31406f" />
            <path d="M6 47q10-4 18 2t14 2v15H17Q6 66 6 55z" fill="#c4cbd8" />
            <path d="M8 60q9-8 20 4H14z" fill="#6b4a38" />
          </Art>
        </Tile>
        <svg viewBox="0 0 72 76" className="absolute top-0 left-0 h-[76px] w-[76px]">
          <path d="M38 50h26l6 18q1 6-8 6H40q-8 0-7-6z" fill="#cfd2d6" fillOpacity="0.920" stroke="#8a8a8a" />
          <path d="M42 56h6v8h-6zM50 60h8v7h-8z" fill="#70757c" />
          <rect x="35" y="35" width="31" height="16" rx="4" fill="#151515" />
        </svg>
      </div>
    ),
  },
  {
    dot: true,
    icon: (
      <Tile className="bg-[#f5f5f4]">
        <Art>
          <circle cx="36" cy="36" r="31" fill="#4aa452" />
          <path d="M9.200 20.500A31 31 0 0 1 62.800 20.500L36 20.500 22.600 43.700z" fill="#d84a3b" />
          <path d="M62.800 20.500A31 31 0 0 1 36 67L49.400 43.700 36 20.500z" fill="#f3bd42" />
          <circle cx="36" cy="35" r="15" fill="#fff" />
          <circle cx="36" cy="35" r="12" fill="#3f7ee8" />
        </Art>
      </Tile>
    ),
  },
  {
    dot: true,
    icon: (
      <Tile className="bg-[#050808]">
        <Art>
          <g fill="#1f7886" stroke="#49c4d4" strokeWidth="1.800">
            <path d="M36 36 17 11v16h-6v19h7v17z" />
            <path d="M36 36 55 11v16h6v19h-7v17z" />
            <path d="M36 6v60M11 46l25-10 25 10M11 27h50M18 63l18-27 18 27" fill="none" />
          </g>
        </Art>
      </Tile>
    ),
  },
  {
    dot: true,
    icon: (
      <Tile className="bg-[#d3d2d0]">
        <Art>
          <rect x="16" y="9" width="40" height="55" rx="7" fill="#2c2f33" />
          <rect x="21" y="14" width="30" height="13" rx="3" fill="#4c4f54" />
          {range(9).map((i) => (
            <circle key={i} cx={25.500 + (i % 3) * 10.500} cy={34 + Math.floor(i / 3) * 10.500} r="3.900" fill={i % 3 === 2 ? "#f09433" : "#cfcfcf"} />
          ))}
        </Art>
      </Tile>
    ),
  },
  {
    dot: true,
    icon: (
      <Tile className="bg-white">
        <SiNordvpn className="absolute top-[9px] left-[11px] h-[50px] w-[50px] text-[#4560f0]" />
      </Tile>
    ),
  },
  {
    dot: true,
    icon: (
      <Tile className="bg-[#4590e6]">
        <FaDocker className="absolute top-[9px] left-[11px] h-[54px] w-[54px] text-white" />
      </Tile>
    ),
  },
  {
    dot: true,
    icon: (
      <Tile className="bg-linear-to-b from-[#d8e4ec] to-[#8b8b8b]">
        <div className="absolute inset-[2.500px] rounded-[15px] bg-black" />
        <Art>
          <rect x="8" y="8" width="56" height="56" rx="9" fill="#1d2d2a" />
          <path d="M8 20h56M8 31h56M8 42h56M8 53h56M20 8v56M31 8v56M42 8v56M53 8v56" stroke="#385650" strokeWidth="1" />
          <path d="M9 40q4 6 8 2h2l2-31 3 39 2-9q4 2 7-3t5-1 4 5q3-8 6-3t7 2h5" fill="none" stroke="#86d8bc" strokeWidth="1.800" />
        </Art>
      </Tile>
    ),
  },
  {
    dot: true,
    icon: (
      <Tile className="bg-linear-to-b from-[#d8e4ec] to-[#8b8b8b]">
        <div className="absolute inset-[2.500px] rounded-[15px] bg-black" />
        <div className="absolute inset-[7px] rounded-[10px] bg-[#2a2a2a]" />
        <Art>
          <path d="m13 14 7 4.500-7 4.500M25 27.500h10" fill="none" stroke="#fff" strokeWidth="2.400" />
        </Art>
      </Tile>
    ),
  },
  {
    dot: true,
    icon: (
      <Tile className="bg-[#cf7454]">
        <SiClaude className="absolute top-[9px] left-[9px] h-[54px] w-[54px] text-[#faf5ef]" />
      </Tile>
    ),
  },
];

const files: DockItem[] = [
  {
    icon: (
      <svg viewBox="0 0 72 80" className="-mb-[4px] h-[80px] w-[72px] shrink-0">
        <path d="M7 4h50q6 0 6 5v43H7z" fill="#4aa3e0" />
        <path d="M8 0h36l18 22v58H8z" fill="#fbfbfb" />
        <path d="M44 0q5 8 3 18 10 0 15 6z" fill="#d0d0d0" />
        <rect x="10" y="1" width="26" height="2.500" fill="#8fc1ea" />
        <path d="M23 30h26l3 38H19z" fill="#a9b0b4" />
        <rect x="25" y="32" width="19" height="6" fill="#222" />
        <circle cx="36" cy="47" r="11" fill="#c4cace" stroke="#8d9498" />
        <rect x="20" y="60" width="31" height="7" fill="#4b4f52" />
      </svg>
    ),
  },
  {
    icon: (
      <svg viewBox="0 0 72 84" className="-mb-[4px] h-[84px] w-[72px] shrink-0">
        <defs>
          <linearGradient id="bin" x1="0" x2="1">
            <stop offset="0" stopColor="#5c6165" />
            <stop offset="0.400" stopColor="#8f9498" />
            <stop offset="1" stopColor="#5b5f63" />
          </linearGradient>
        </defs>
        <path d="M3 10h66l-8 68q-1 6-25 6t-25-6z" fill="url(#bin)" />
        <ellipse cx="36" cy="12" rx="33" ry="7" fill="#55595c" />
        <path d="m6 14 6-9 8 3 6-8 8 5 10-4 6 6 8-2 8 8-7 6H14z" fill="#e9e9e6" />
        <path d="m14 8 8 6 4-6zM34 6l9 8 5-7zM52 9l8 6-9 2z" fill="#7c8f98" />
        <path d="m26 12 5-3 2 6zM46 14l4-4 2 6z" fill="#c4694a" />
        <path d="M6 18h60" stroke="#b2b5b7" strokeWidth="1.500" />
      </svg>
    ),
  },
];

function DockGroup({ items, gap }: { items: DockItem[]; gap: string }) {
  return (
    <div className={`flex ${gap}`}>
      {items.map((it, i) => (
        <div key={i} className="relative flex h-[72px] w-[72px] items-end justify-center">
          {it.icon}
          {it.badge && (
            <div className="absolute -top-[10px] -right-[11px] flex h-[36px] min-w-[36px] items-center justify-center rounded-full bg-[#dd4a3e] px-[4px] text-[20px] tracking-[-0.900px] text-white">
              {it.badge}
            </div>
          )}
          {it.dot && <div className="absolute top-[89px] left-[32px] h-[8px] w-[8px] rounded-full bg-[#a5a59e]" />}
        </div>
      ))}
    </div>
  );
}

function Dock() {
  return (
    <div className="absolute top-[1669px] left-[81px] flex h-[121px] w-[2719px] rounded-[36px] border-2 border-[#4d4e48] bg-linear-to-r from-[#1a2118] via-[#1e211a] to-[#241d17] pt-[18px] pl-[15px] shadow-[0_0_20px_rgba(0,0,0,0.4)]">
      <DockGroup items={leftApps} gap="gap-[25.100px]" />
      <div className="mr-[33px] ml-[34px] -mt-[3px] h-[88px] w-[2px] shrink-0 bg-[#55574f]" />
      <DockGroup items={rightApps} gap="gap-[25.400px]" />
      <div className="mr-[34px] ml-[33px] -mt-[3px] h-[88px] w-[2px] shrink-0 bg-[#55534c]" />
      <DockGroup items={files} gap="gap-[25.400px]" />
    </div>
  );
}

/* ---------- Desktop ---------- */

export default function App() {
  return (
    <div className="relative flex h-[1800px] w-[2880px] flex-col overflow-hidden bg-[#11150f] bg-[radial-gradient(ellipse_90px_60px_at_30px_1740px,#20301f,transparent),radial-gradient(ellipse_420px_50px_at_600px_1800px,#4a2c1b,transparent),radial-gradient(ellipse_500px_30px_at_1250px_1800px,#35402a,transparent),radial-gradient(ellipse_400px_30px_at_2200px_1800px,#4a3322,transparent),radial-gradient(ellipse_120px_160px_at_2850px_1760px,#3a2014,transparent)] font-['Inter',sans-serif]">
      <MenuBar />
      <div className="absolute top-[50px] left-0 h-[1626px] w-[300px] overflow-hidden rounded-[22px] border-2 border-[#474645] bg-linear-to-r from-[#272624] to-[#151412]">
        <div className="mt-[146px] ml-[18px] flex h-[56px] w-[60px] items-center rounded-[10px] bg-[#2e2d2c] pl-[8px]">
          <svg viewBox="0 0 16 10" className="h-[10px] w-[16px]" fill="none" stroke="#8a8a88" strokeWidth="2">
            <path d="m1 1 7 7 7-7" />
          </svg>
        </div>
      </div>
      <div className="absolute top-[1500px] right-[6px] h-[184px] w-[400px] rounded-[22px] border-2 border-[#3a3a3a] bg-[#151515]" />
      <div className="absolute top-[1500px] right-[3px] h-[176px] w-[400px] rounded-[22px] border-2 border-[#555] bg-[#8a8a8a]" />
      <BrowserWindow />
      <Dock />
    </div>
  );
}
